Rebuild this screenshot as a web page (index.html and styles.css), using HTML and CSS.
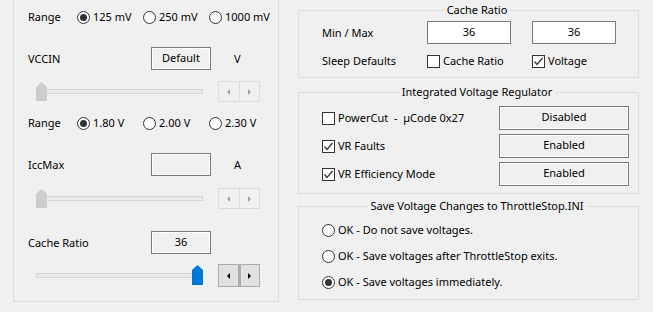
FILE: index.html
```html
<!DOCTYPE html>
<html lang="en">
<head>
    <meta charset="UTF-8">
    <title>ThrottleStop - FIVR</title>
    <link rel="stylesheet" href="styles.css">
</head>
<body>
    <div class="window">
        <section class="panel">
            <div class="radio-row">
                <span class="lbl">Range</span>
                <span class="opt"><span class="radio on"></span>125 mV</span>
                <span class="opt"><span class="radio"></span>250 mV</span>
                <span class="opt"><span class="radio"></span>1000 mV</span>
            </div>

            <div class="value-row first">
                <span class="lbl">VCCIN</span>
                <span class="box">Default</span>
                <span class="unit">V</span>
            </div>
            <div class="slider-row">
                <div class="slider"><span class="track"></span><span class="thumb"></span></div>
                <div class="spin"><span class="arrow left"></span><span class="arrow right"></span></div>
            </div>

            <div class="radio-row gap">
                <span class="lbl">Range</span>
                <span class="opt"><span class="radio on"></span>1.80 V</span>
                <span class="opt"><span class="radio"></span>2.00 V</span>
                <span class="opt"><span class="radio"></span>2.30 V</span>
            </div>

            <div class="value-row">
                <span class="lbl">IccMax</span>
                <span class="box"></span>
                <span class="unit">A</span>
            </div>
            <div class="slider-row second">
                <div class="slider"><span class="track"></span><span class="thumb"></span></div>
                <div class="spin"><span class="arrow left"></span><span class="arrow right"></span></div>
            </div>

            <div class="value-row last">
                <span class="lbl">Cache Ratio</span>
                <span class="box">36</span>
            </div>
            <div class="slider-row active">
                <div class="slider"><span class="track short"></span><span class="thumb max"></span></div>
                <div class="spin"><span class="arrow left"></span><span class="arrow right"></span></div>
            </div>
        </section>

        <div class="side">
            <fieldset class="group cache">
                <legend>Cache Ratio</legend>
                <div class="grid-row">
                    <span>Min / Max</span>
                    <span class="field">36</span>
                    <span class="field">36</span>
                </div>
                <div class="grid-row sleep">
                    <span>Sleep Defaults</span>
                    <span class="check-item"><span class="check"></span>Cache Ratio</span>
                    <span class="check-item"><span class="check on"><svg viewBox="0 0 11 11"><polyline points="1.5,5.5 4,8.5 9.5,2"/></svg></span>Voltage</span>
                </div>
            </fieldset>

            <fieldset class="group ivr">
                <legend>Integrated Voltage Regulator</legend>
                <div class="ivr-row">
                    <span class="check-item"><span class="check"></span>PowerCut&nbsp; - &nbsp;µCode 0x27</span>
                    <span class="state">Disabled</span>
                </div>
                <div class="ivr-row">
                    <span class="check-item"><span class="check on"><svg viewBox="0 0 11 11"><polyline points="1.5,5.5 4,8.5 9.5,2"/></svg></span>VR Faults</span>
                    <span class="state">Enabled</span>
                </div>
                <div class="ivr-row">
                    <span class="check-item"><span class="check on"><svg viewBox="0 0 11 11"><polyline points="1.5,5.5 4,8.5 9.5,2"/></svg></span>VR Efficiency Mode</span>
                    <span class="state">Enabled</span>
                </div>
            </fieldset>

            <fieldset class="group save">
                <legend>Save Voltage Changes to ThrottleStop.INI</legend>
                <div class="save-row"><span class="radio"></span>OK - Do not save voltages.</div>
                <div class="save-row"><span class="radio"></span>OK - Save voltages after ThrottleStop exits.</div>
                <div class="save-row"><span class="radio on"></span>OK - Save voltages immediately.</div>
            </fieldset>
        </div>
    </div>
</body>
</html>
```

FILE: styles.css
```css
:root {
    --face: #F0F0F0;
    --frame: #DCDCDC;
    --edge: #7A7A7A;
    --ink: #000000;
    --mark: #333333;
    --blue: #0078D7;
}

body {
    margin: 0;
    background-color: var(--face);
    color: var(--ink);
    font-family: "Noto Sans", "Open Sans", sans-serif;
    font-size: 11px;
    line-height: 16px;
}

.window {
    display: flex;
    align-items: flex-start;
    gap: 19px;
    padding-left: 13px;
    width: 653px;
    height: 312px;
    box-sizing: border-box;
}

/* left voltage panel - top edge sits above the visible area */
.panel {
    width: 266px;
    height: 302px;
    box-sizing: border-box;
    border: 1px solid var(--frame);
    border-top: none;
    padding: 7px 0 0 14px;
}

.radio-row {
    display: grid;
    grid-template-columns: 49px 66px 66px auto;
    align-items: center;
    height: 20px;
}

.radio-row.gap {
    margin-top: 11px;
}

.opt {
    display: flex;
    align-items: center;
    gap: 3px;
    white-space: nowrap;
}

.radio {
    width: 13px;
    height: 13px;
    box-sizing: border-box;
    border: 1px solid var(--mark);
    border-radius: 50%;
    background-color: #FFFFFF;
    display: inline-flex;
    align-items: center;
    justify-content: center;
    flex: none;
}

.radio.on::after {
    content: "";
    width: 7px;
    height: 7px;
    border-radius: 50%;
    background-color: var(--mark);
}

.value-row {
    display: flex;
    align-items: center;
    height: 23px;
    margin-top: 20px;
}

.value-row.last {
    margin-top: 22px;
}

.value-row .lbl {
    width: 123px;
}

.box {
    width: 60px;
    height: 23px;
    box-sizing: border-box;
    border: 1px solid var(--edge);
    box-shadow: inset 0 0 0 1px #FFFFFF;
    text-align: center;
    line-height: 19px;
}

.unit {
    margin-left: 23px;
}

.slider-row {
    display: flex;
    align-items: center;
    height: 21px;
    margin-top: 11px;
}

.slider-row.second {
    margin-top: 12px;
}

.slider {
    position: relative;
    width: 167px;
    height: 21px;
    margin-left: 8px;
}

.track {
    position: absolute;
    left: 0;
    right: 0;
    top: 8px;
    height: 5px;
    box-sizing: border-box;
    border: 1px solid #D6D6D6;
    background-color: #E7EAEA;
}

.track.short {
    right: 8px;
}

.thumb {
    position: absolute;
    left: 0;
    top: 1px;
    width: 11px;
    height: 19px;
    background-color: #CDCDCD;
    clip-path: polygon(50% 0, 100% 5px, 100% 100%, 0 100%, 0 5px);
}

.thumb.max {
    left: auto;
    right: 0;
    top: 0;
    height: 20px;
    background-color: var(--blue);
}

.spin {
    display: flex;
    margin-left: 15px;
    width: 42px;
    height: 21px;
}

.spin span {
    flex: 1;
    border: 1px solid var(--frame);
    display: flex;
    align-items: center;
    justify-content: center;
}

.spin span + span {
    border-left-width: 0;
}

.arrow::after {
    content: "";
    border-top: 3px solid transparent;
    border-bottom: 3px solid transparent;
}

.arrow.left::after {
    border-right: 3px solid #A0A0A0;
}

.arrow.right::after {
    border-left: 3px solid #A0A0A0;
}

.active .spin {
    height: 23px;
}

.active .spin span {
    border-color: #ADADAD;
    background-color: #E1E1E1;
}

.active .spin span + span {
    border-left: 2px solid #ADADAD;
}

.active .arrow.left::after {
    border-right-color: #000000;
}

.active .arrow.right::after {
    border-left-color: #000000;
}

/* right column group boxes */
.side {
    width: 341px;
    display: flex;
    flex-direction: column;
    padding-top: 2px;
}

.group {
    margin: 0;
    border: 1px solid var(--frame);
    padding: 0 6px 7px 23px;
    min-width: 0;
}

.group legend {
    margin: 0 auto;
    padding: 0 3px;
}

.grid-row {
    display: grid;
    grid-template-columns: 84px 84px 84px;
    column-gap: 21px;
    align-items: center;
}

.cache .grid-row:first-of-type {
    margin-top: 3px;
}

.grid-row.sleep {
    margin-top: 8px;
    height: 18px;
}

.field {
    height: 23px;
    box-sizing: border-box;
    border: 1px solid var(--edge);
    background-color: #FFFFFF;
    text-align: center;
    line-height: 20px;
}

.check-item {
    display: flex;
    align-items: center;
    gap: 3px;
    white-space: nowrap;
}

.check {
    width: 13px;
    height: 13px;
    box-sizing: border-box;
    border: 1px solid var(--mark);
    background-color: #FFFFFF;
    flex: none;
    display: flex;
}

.check svg {
    width: 11px;
    height: 11px;
    fill: none;
    stroke: var(--mark);
    stroke-width: 1.3;
}

.ivr {
    margin-top: 6px;
    padding-top: 6px;
}

.ivr-row {
    display: flex;
    align-items: center;
    justify-content: space-between;
    padding-right: 3px;
}

.ivr-row + .ivr-row {
    margin-top: 4px;
}

.state {
    width: 130px;
    height: 24px;
    box-sizing: border-box;
    border: 1px solid var(--edge);
    box-shadow: inset 0 0 0 1px #FFFFFF;
    text-align: center;
    line-height: 20px;
}

.save {
    margin-top: 4px;
    padding-top: 6px;
}

.save-row {
    display: flex;
    align-items: center;
    gap: 3px;
    height: 20px;
}

.save-row + .save-row {
    margin-top: 6px;
}
```
